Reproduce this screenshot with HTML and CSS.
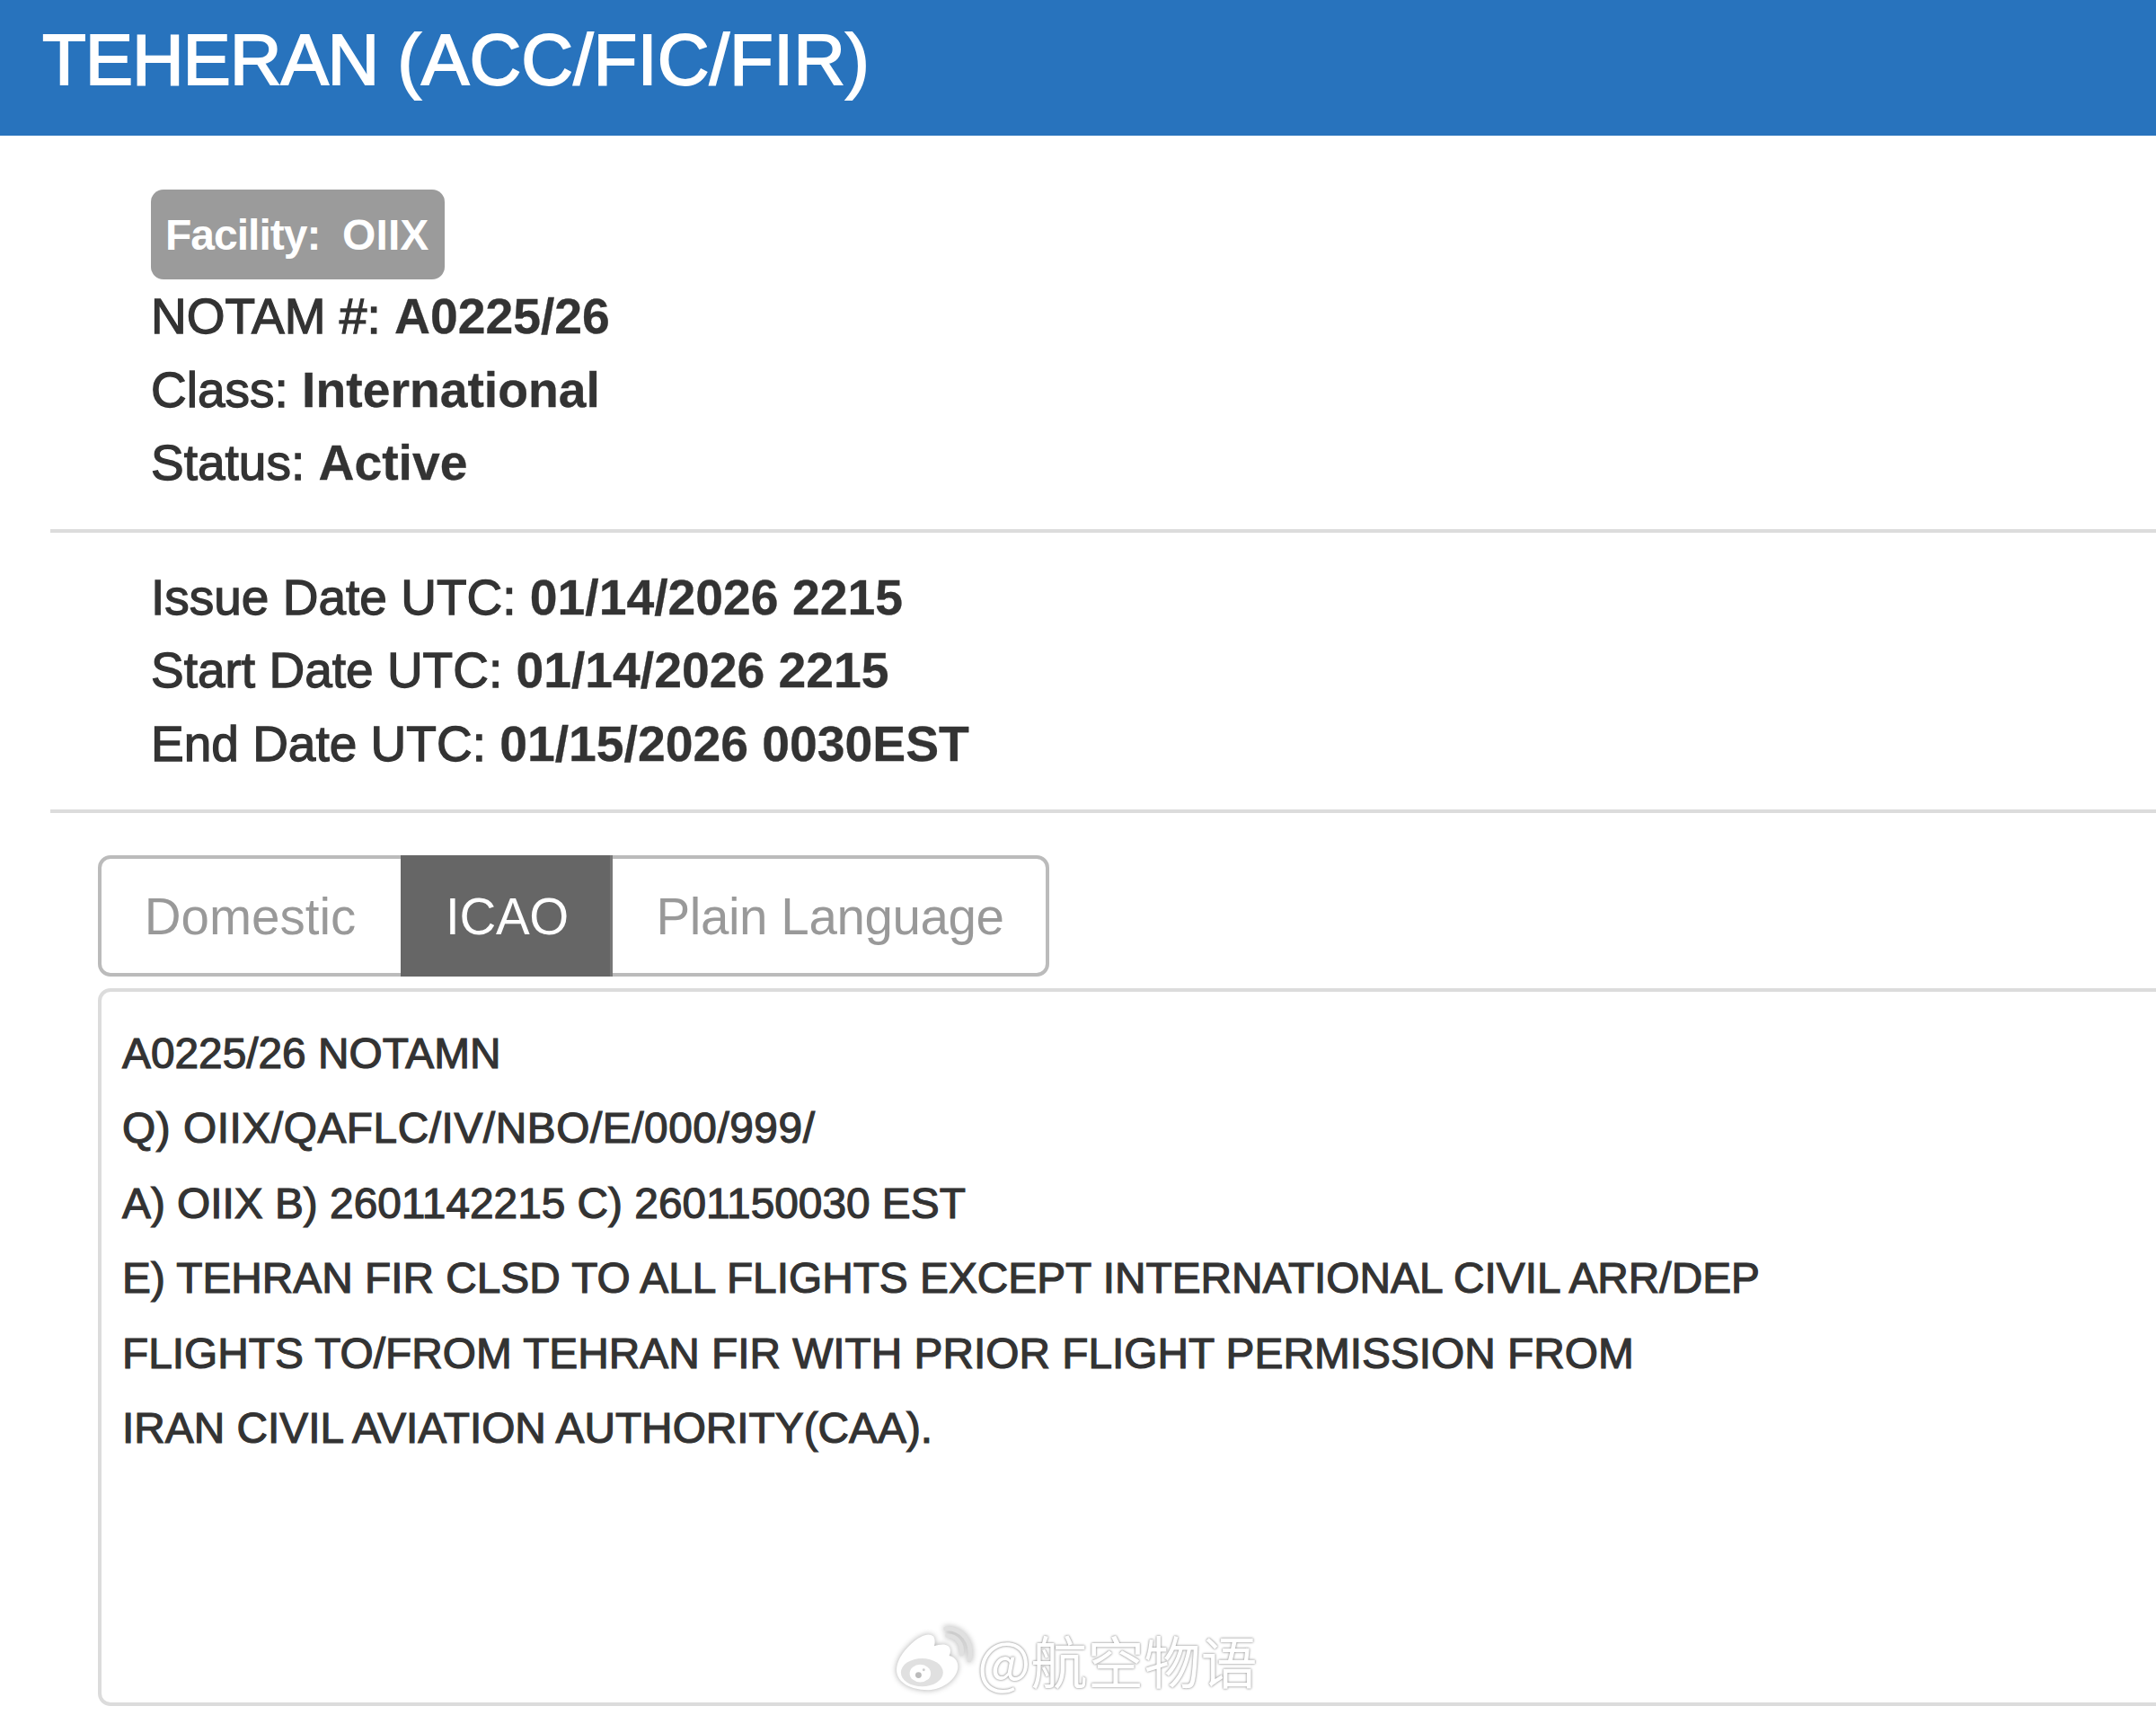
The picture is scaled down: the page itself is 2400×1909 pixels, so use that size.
FILE: index.html
```html
<!DOCTYPE html>
<html lang="en">
<head>
<meta charset="utf-8">
<title>TEHERAN (ACC/FIC/FIR)</title>
<link rel="stylesheet" href="styles.css">
</head>
<body>
<header class="banner"><h1 class="title">TEHERAN <span class="title-sub">(ACC/FIC/FIR)</span></h1></header>
<main class="content">
  <section class="info">
    <div class="badge">Facility:&nbsp; <span class="badge-id">OIIX</span></div>
    <div class="row">NOTAM #: <b>A0225/26</b></div>
    <div class="row">Class: <b>International</b></div>
    <div class="row">Status: <b>Active</b></div>
  </section>
  <hr class="rule">
  <section class="info">
    <div class="row">Issue Date UTC: <b>01/14/2026 2215</b></div>
    <div class="row">Start Date UTC: <b>01/14/2026 2215</b></div>
    <div class="row">End Date UTC: <b>01/15/2026 0030EST</b></div>
  </section>
  <hr class="rule">
  <nav class="tabs">
    <span class="tab tab-domestic">Domestic</span>
    <span class="tab tab-active">ICAO</span>
    <span class="tab tab-plain">Plain Language</span>
  </nav>
  <section class="panel">
    <div class="line">A0225/26 NOTAMN</div>
    <div class="line line-q">Q) OIIX/QAFLC/IV/NBO/E/000/999/</div>
    <div class="line">A) OIIX B) 2601142215 C) 2601150030 EST</div>
    <div class="line">E) TEHRAN FIR CLSD TO ALL FLIGHTS EXCEPT INTERNATIONAL CIVIL ARR/DEP</div>
    <div class="line">FLIGHTS TO/FROM TEHRAN FIR WITH PRIOR FLIGHT PERMISSION FROM</div>
    <div class="line">IRAN CIVIL AVIATION AUTHORITY(CAA).</div>
  </section>
</main>
<div class="watermark">
  <svg class="wm-logo" width="84" height="70" viewBox="0 0 86 70">
    <path d="M36 70C16 70 0 61 0 47C0 38 6 27 17 17C27 8 37 4 42 9C44 12 44 16 43 20C49 18 55 17 59 20C62 23 62 27 60 31C65 32 70 36 70 43C70 56 54 70 36 70Z" fill="#fff"/>
    <ellipse cx="29" cy="50" rx="24" ry="16" fill="#e0e0e0"/>
    <ellipse cx="27" cy="51" rx="12" ry="10" fill="#fff"/>
    <circle cx="25" cy="53" r="3.5" fill="#bbb"/>
    <circle cx="31" cy="47" r="1.5" fill="#ccc"/>
    <path d="M58 8C68 8 76 17 74 29" fill="none" stroke="#e0e0e0" stroke-width="5" stroke-linecap="round"/>
    <path d="M56 0C74 -1 88 15 83 36" fill="none" stroke="#e0e0e0" stroke-width="5" stroke-linecap="round"/>
  </svg>
  <span class="wm-text">@航空物语</span>
</div>
</body>
</html>
```

FILE: styles.css
```css
* { box-sizing: border-box; }
html, body { margin: 0; padding: 0; }
body {
  width: 2400px;
  height: 1909px;
  overflow: hidden;
  position: relative;
  background: #fff;
  font-family: "Liberation Sans", Arial, sans-serif;
  color: #333;
}
.banner {
  height: 151px;
  background: #2873bd;
  padding: 23px 0 0 47px;
}
.title {
  margin: 0;
  font-size: 80px;
  line-height: 88px;
  font-weight: 400;
  letter-spacing: -1.15px;
  color: #fff;
  -webkit-text-stroke: 1.8px #fff;
}
.title-sub { letter-spacing: 0.1px; }
.content { padding: 60px 0 0 56px; }
.info { padding-left: 112px; }
.badge {
  width: 327px;
  height: 100px;
  padding: 0 0 0 16px;
  border-radius: 14px;
  background: #9b9b9b;
  color: #fff;
  font-size: 48px;
  font-weight: 700;
  line-height: 102px;
  letter-spacing: -1px;
  margin-bottom: 1px;
}
.badge-id { letter-spacing: 0.1px; }
.row {
  height: 81.5px;
  font-size: 55px;
  line-height: 81.5px;
  -webkit-text-stroke: 1.3px #333;
}
.row b { font-size: 55.3px; font-weight: 700; -webkit-text-stroke: 0.3px #333; }
.rule {
  height: 4px;
  margin: 32px -10px 32px 0;
  border: 0;
  background: #dcdcdc;
}
.rule + .info + .rule { margin-bottom: 47px; }
.tabs {
  display: flex;
  width: 1059px;
  height: 135px;
  margin-left: 53px;
  border: 4px solid #bbb;
  border-radius: 14px;
  background: #fff;
}
.tab {
  margin: -4px 0;
  font-size: 56.5px;
  line-height: 137px;
  color: #999;
  text-align: center;
}
.tab-domestic { width: 333px; padding-right: 2px; }
.tab-active { width: 236px; background: #666; color: #fff; border-right: 3px solid #777; padding-left: 4px; letter-spacing: -0.3px; }
.tab-plain { flex: 1; padding-left: 2px; letter-spacing: -0.4px; }
.panel {
  height: 799px;
  margin: 13px -20px 0 53px;
  padding: 27px 0 0 23px;
  border: 4px solid #dcdcdc;
  border-radius: 14px;
}
.line {
  height: 83.4px;
  font-size: 47.8px;
  line-height: 83.4px;
  white-space: nowrap;
  -webkit-text-stroke: 1.2px #333;
}
.line-q { letter-spacing: 0.55px; }
.watermark {
  position: absolute;
  left: 998px;
  top: 1812px;
  display: flex;
  align-items: center;
  gap: 6px;
}
.wm-logo { filter: drop-shadow(0 0 3px #aaa); overflow: visible; }
.wm-text {
  font-family: "Noto Sans CJK SC", "Liberation Sans", sans-serif;
  font-size: 63px;
  line-height: 70px;
  color: #fff;
  text-shadow: 0 0 3px #999, 0 0 2px #aaa;
}
```
